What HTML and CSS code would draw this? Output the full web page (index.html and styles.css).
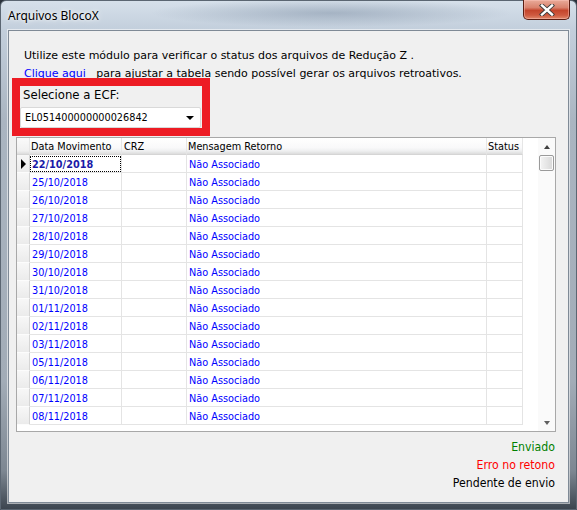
FILE: index.html
```html
<!DOCTYPE html>
<html lang="pt">
<head>
<meta charset="utf-8">
<title>Arquivos BlocoX</title>
<link rel="stylesheet" href="styles.css">
</head>
<body>
<div class="window">
  <div class="titlebar">
    <span class="title">Arquivos BlocoX</span>
    <div class="close">
      <svg width="16" height="12" viewBox="0 0 16 12">
        <path d="M3 1.5 L13 10.5 M13 1.5 L3 10.5" stroke="#3a3a3a" stroke-width="4.2" stroke-linecap="square" fill="none"/>
        <path d="M3 1.5 L13 10.5 M13 1.5 L3 10.5" stroke="#ffffff" stroke-width="2.4" stroke-linecap="square" fill="none"/>
      </svg>
    </div>
  </div>
  <div class="client">
    <p class="intro">Utilize este módulo para verificar o status dos arquivos de Redução Z .</p>
    <p class="intro"><a class="link" href="#">Clique aqui</a>&nbsp;&nbsp; para ajustar a tabela sendo possível gerar os arquivos retroativos.</p>
    <div class="ecf-box">
      <div class="ecf-label">Selecione a ECF:</div>
      <div class="combo">
        <span class="combo-text">EL051400000000026842</span>
        <span class="combo-arrow"></span>
      </div>
    </div>
    <div class="grid">
      <div class="grid-main">
        <div class="row header">
          <div class="cell ind"></div>
          <div class="cell c-data">Data Movimento</div>
          <div class="cell c-crz">CRZ</div>
          <div class="cell c-msg">Mensagem Retorno</div>
          <div class="cell c-status">Status</div>
        </div>
        <div class="row current">
          <div class="cell ind"><span class="pointer"></span></div>
          <div class="cell c-data"><span class="focus">22/10/2018</span></div>
          <div class="cell c-crz"></div>
          <div class="cell c-msg">Não Associado</div>
          <div class="cell c-status"></div>
        </div>
        <div class="row"><div class="cell ind"></div><div class="cell c-data">25/10/2018</div><div class="cell c-crz"></div><div class="cell c-msg">Não Associado</div><div class="cell c-status"></div></div>
        <div class="row"><div class="cell ind"></div><div class="cell c-data">26/10/2018</div><div class="cell c-crz"></div><div class="cell c-msg">Não Associado</div><div class="cell c-status"></div></div>
        <div class="row"><div class="cell ind"></div><div class="cell c-data">27/10/2018</div><div class="cell c-crz"></div><div class="cell c-msg">Não Associado</div><div class="cell c-status"></div></div>
        <div class="row"><div class="cell ind"></div><div class="cell c-data">28/10/2018</div><div class="cell c-crz"></div><div class="cell c-msg">Não Associado</div><div class="cell c-status"></div></div>
        <div class="row"><div class="cell ind"></div><div class="cell c-data">29/10/2018</div><div class="cell c-crz"></div><div class="cell c-msg">Não Associado</div><div class="cell c-status"></div></div>
        <div class="row"><div class="cell ind"></div><div class="cell c-data">30/10/2018</div><div class="cell c-crz"></div><div class="cell c-msg">Não Associado</div><div class="cell c-status"></div></div>
        <div class="row"><div class="cell ind"></div><div class="cell c-data">31/10/2018</div><div class="cell c-crz"></div><div class="cell c-msg">Não Associado</div><div class="cell c-status"></div></div>
        <div class="row"><div class="cell ind"></div><div class="cell c-data">01/11/2018</div><div class="cell c-crz"></div><div class="cell c-msg">Não Associado</div><div class="cell c-status"></div></div>
        <div class="row"><div class="cell ind"></div><div class="cell c-data">02/11/2018</div><div class="cell c-crz"></div><div class="cell c-msg">Não Associado</div><div class="cell c-status"></div></div>
        <div class="row"><div class="cell ind"></div><div class="cell c-data">03/11/2018</div><div class="cell c-crz"></div><div class="cell c-msg">Não Associado</div><div class="cell c-status"></div></div>
        <div class="row"><div class="cell ind"></div><div class="cell c-data">05/11/2018</div><div class="cell c-crz"></div><div class="cell c-msg">Não Associado</div><div class="cell c-status"></div></div>
        <div class="row"><div class="cell ind"></div><div class="cell c-data">06/11/2018</div><div class="cell c-crz"></div><div class="cell c-msg">Não Associado</div><div class="cell c-status"></div></div>
        <div class="row"><div class="cell ind"></div><div class="cell c-data">07/11/2018</div><div class="cell c-crz"></div><div class="cell c-msg">Não Associado</div><div class="cell c-status"></div></div>
        <div class="row"><div class="cell ind"></div><div class="cell c-data">08/11/2018</div><div class="cell c-crz"></div><div class="cell c-msg">Não Associado</div><div class="cell c-status"></div></div>
      </div>
      <div class="scrollbar">
        <span class="sb-arrow up"></span>
        <span class="sb-thumb"></span>
        <span class="sb-fill"></span>
        <span class="sb-arrow down"></span>
      </div>
    </div>
    <div class="legend">
      <div class="lg-sent">Enviado</div>
      <div class="lg-error">Erro no retono</div>
      <div class="lg-pending">Pendente de envio</div>
    </div>
  </div>
</div>
</body>
</html>
```
FILE: styles.css
```css
* { box-sizing: border-box; }
html, body {
  margin: 0;
  padding: 0;
  width: 577px;
  height: 510px;
  overflow: hidden;
  background: #2a323c;
}
.window {
  width: 577px;
  height: 510px;
  border-radius: 6px 6px 0 0;
  border: 1px solid #5b6672;
  background:
    radial-gradient(ellipse 180px 14px at 330px 12px, rgba(90,110,135,0.35), rgba(90,110,135,0) 100%),
    linear-gradient(to bottom, #d6e0ea 0px, #c3cfdc 28px, #aab5c1 120px, #a2acb7 380px, #7d8792 470px, #39424c 510px);
  display: flex;
  flex-direction: column;
  font-family: "DejaVu Sans Condensed", "DejaVu Sans", sans-serif;
  font-stretch: condensed;
}
.titlebar {
  height: 29px;
  display: flex;
  justify-content: space-between;
  align-items: flex-start;
  padding-left: 7px;
  padding-right: 6px;
}
.title {
  font-family: "Noto Sans", "Open Sans", sans-serif;
  font-stretch: normal;
  font-size: 12px;
  line-height: 16px;
  margin-top: 7px;
  color: #000;
  text-shadow: 0 0 6px rgba(255,255,255,0.9), 0 0 3px rgba(255,255,255,0.9);
}
.close {
  width: 47px;
  height: 20px;
  margin-top: -1px;
  border: 1px solid #5a1d12;
  border-top: none;
  border-radius: 0 0 5px 5px;
  background: linear-gradient(to bottom, #e9ab9a 0%, #d9826d 40%, #c4452c 55%, #cf5a40 80%, #e08a6c 100%);
  box-shadow: inset 0 0 0 1px rgba(255,200,190,0.45);
  display: flex;
  align-items: center;
  justify-content: center;
}
.client {
  margin: 0 7px 0 7px;
  height: 473px;
  background: #f0f0f0;
  border: 1px solid #7f8a96;
  box-shadow: 0 0 0 1px rgba(255,255,255,0.55);
  font-size: 10.8px;
}
.intro {
  margin: 0 0 0 15px;
  font-family: "DejaVu Sans", sans-serif;
  font-stretch: normal;
  font-size: 11px;
  line-height: 18px;
  height: 18px;
  color: #000;
  white-space: nowrap;
}
.intro:first-child {
  margin-top: 16px;
}
.link {
  color: #0000ff;
  text-decoration: underline;
}
.ecf-box {
  position: relative;
  margin: -5px 0 0 3px;
  width: 198px;
  height: 58px;
  border: 8px solid #ed1c24;
  background: #f0f0f0;
}
.ecf-label {
  font-size: 13px;
  line-height: 17px;
  height: 17px;
  padding-left: 3px;
  color: #000;
}
.combo {
  margin-top: 4px;
  width: 181px;
  height: 21px;
  background: #fff;
  border: 1px solid #d9d9d9;
  border-radius: 2px;
  display: flex;
  align-items: center;
  justify-content: space-between;
  padding: 0 6px 0 4px;
}
.combo-text {
  font-size: 10.8px;
  color: #000;
}
.combo-arrow {
  width: 0;
  height: 0;
  border-left: 4px solid transparent;
  border-right: 4px solid transparent;
  border-top: 4px solid #000;
  margin-top: 1px;
}
.grid {
  margin: 1px 0 0 7px;
  width: 540px;
  height: 295px;
  border: 1px solid #a8a8a8;
  background: #fff;
  display: flex;
}
.grid-main {
  flex: 1;
  display: flex;
  flex-direction: column;
}
.row {
  display: flex;
  height: 18px;
}
.cell {
  height: 18px;
  border-right: 1px solid #e4e4e4;
  border-bottom: 1px solid #e4e4e4;
  padding-top: 2px;
  line-height: 15px;
  padding-left: 2px;
  color: #0000ff;
  white-space: nowrap;
  overflow: hidden;
}
.ind {
  width: 13px;
  padding: 0;
  background: linear-gradient(to bottom, #f7f7f7, #ebebeb);
  border-right: 1px solid #d4d4d4;
  border-bottom: 1px solid #fcfcfc;
  position: relative;
}
.c-data { width: 92px; }
.c-crz { width: 65px; }
.c-msg { width: 300px; }
.c-status { width: 36px; }
.header {
  height: 17px;
}
.header .cell {
  height: 17px;
  padding-top: 1px;
  line-height: 15px;
  color: #000;
  padding-left: 1px;
  background: linear-gradient(to bottom, #ffffff 0%, #f9f9fa 60%, #eff0f1 80%, #dcdcdc 100%);
  border-right: 1px solid #e6e6e6;
  border-bottom: 1px solid #d5d5d5;
}
.header .ind {
  background: linear-gradient(to bottom, #fafafa 0%, #f0f0f0 80%, #dcdcdc 100%);
}
.header .c-crz { padding-left: 2px; }
.pointer {
  position: absolute;
  left: 4px;
  top: 4px;
  width: 0;
  height: 0;
  border-top: 5px solid transparent;
  border-bottom: 5px solid transparent;
  border-left: 5px solid #000;
}
.current .c-data {
  padding: 1px 0 1px 0;
}
.focus {
  display: block;
  height: 16px;
  padding-top: 1px;
  line-height: 13px;
  padding-left: 1px;
  border: 1px dotted #000;
  font-weight: bold;
  color: #1a1aa8;
}
.scrollbar {
  width: 17px;
  display: flex;
  flex-direction: column;
  align-items: center;
  background: #fafafa;
}
.sb-arrow {
  height: 17px;
  width: 17px;
  display: flex;
  align-items: center;
  justify-content: center;
  flex-shrink: 0;
}
.sb-arrow.up::before {
  content: "";
  border-left: 3.5px solid transparent;
  border-right: 3.5px solid transparent;
  border-bottom: 4px solid #404040;
}
.sb-arrow.down::before {
  content: "";
  border-left: 3.5px solid transparent;
  border-right: 3.5px solid transparent;
  border-top: 4px solid #606060;
}
.sb-thumb {
  width: 15px;
  height: 16px;
  border: 1px solid #9a9a9a;
  border-radius: 2px;
  background: linear-gradient(to right, #f4f4f4, #e6e6e6 50%, #d8d8d8);
  box-shadow: inset 0 0 0 1px #fbfbfb;
}
.sb-fill { flex: 1; }
.legend {
  margin: 6px 13px 0 0;
  text-align: right;
  font-size: 12.2px;
  line-height: 18px;
}
.lg-sent { color: #008000; }
.lg-error { color: #ff0000; }
.lg-pending { color: #000; }
```
